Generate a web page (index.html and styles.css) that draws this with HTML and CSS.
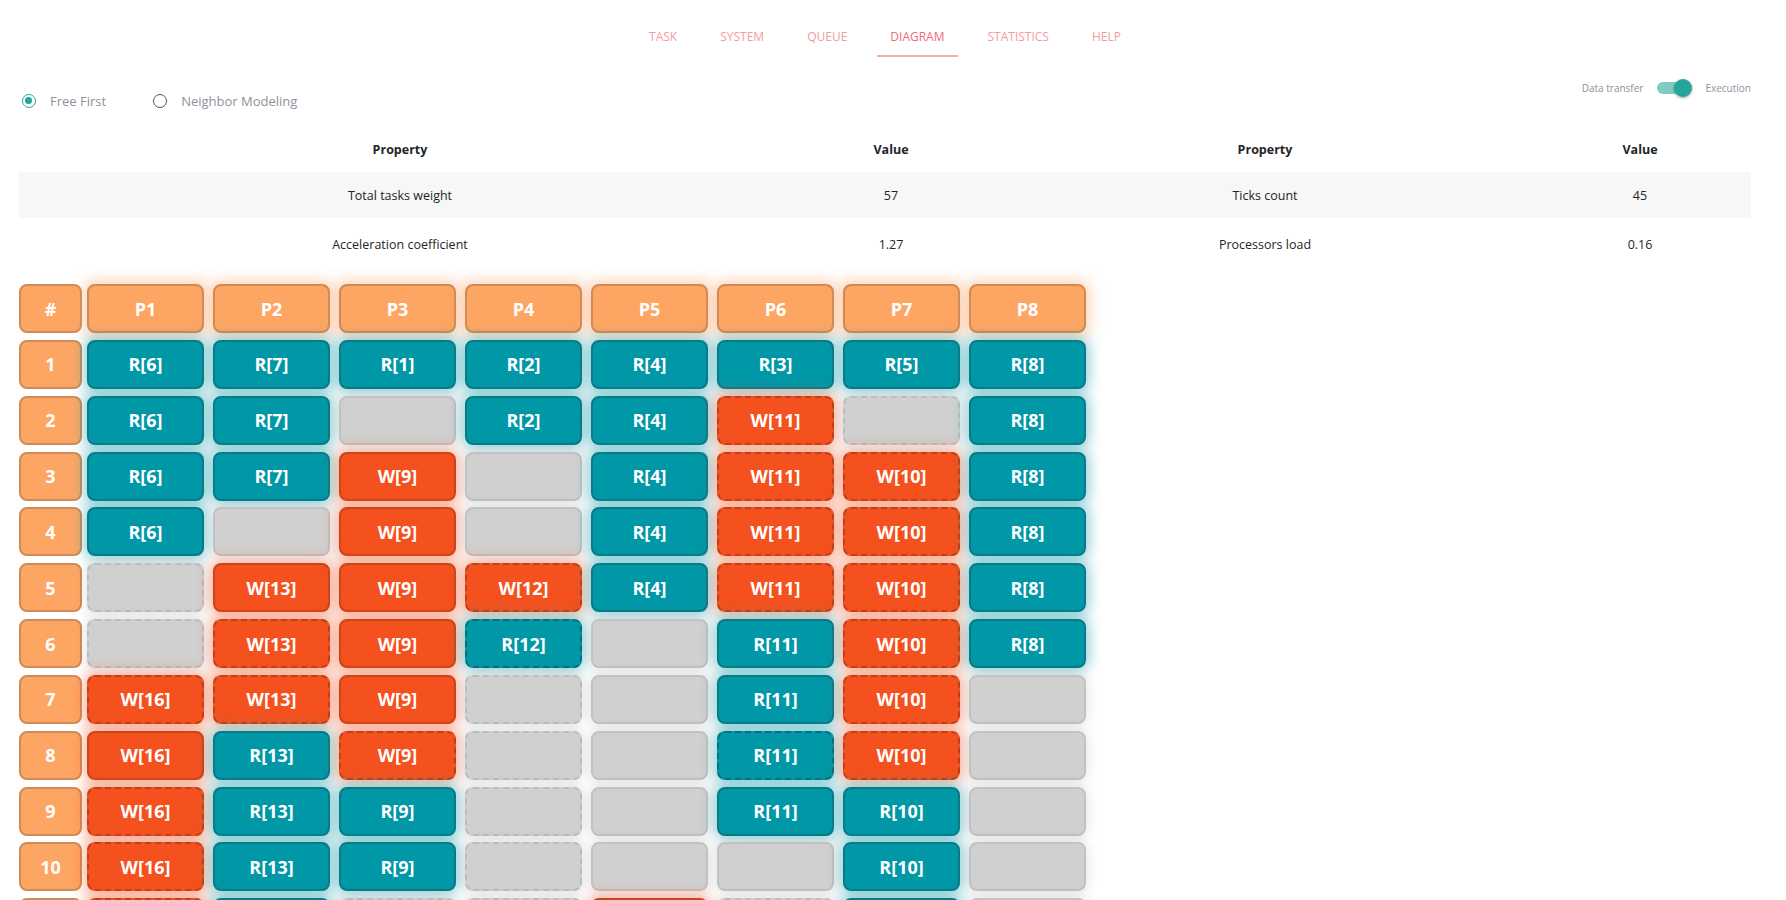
FILE: index.html
```html
<!DOCTYPE html>
<html lang="en">
<head>
<meta charset="utf-8">
<title>Diagram</title>
<link rel="stylesheet" href="styles.css">
</head>
<body>
<div class="app">
  <nav class="tabs">
    <a class="tab">TASK</a>
    <a class="tab">SYSTEM</a>
    <a class="tab">QUEUE</a>
    <a class="tab active">DIAGRAM</a>
    <a class="tab">STATISTICS</a>
    <a class="tab">HELP</a>
  </nav>

  <div class="controls">
    <div class="radios">
      <label class="radio checked"><span class="ring"></span><span class="rlabel">Free First</span></label>
      <label class="radio"><span class="ring"></span><span class="rlabel">Neighbor Modeling</span></label>
    </div>
    <div class="toggle">
      <span class="tlabel">Data transfer</span>
      <span class="switch"><span class="track"></span><span class="thumb"></span></span>
      <span class="tlabel">Execution</span>
    </div>
  </div>

  <table class="props">
    <colgroup><col class="c1"><col class="c2"><col class="c3"><col class="c4"></colgroup>
    <thead>
      <tr><th>Property</th><th>Value</th><th>Property</th><th>Value</th></tr>
    </thead>
    <tbody>
      <tr class="striped"><td>Total tasks weight</td><td>57</td><td>Ticks count</td><td>45</td></tr>
      <tr class="last"><td>Acceleration coefficient</td><td>1.27</td><td>Processors load</td><td>0.16</td></tr>
    </tbody>
  </table>

  <div class="diagram">
    <div class="cell idx">#</div>
    <div class="cell head">P1</div><div class="cell head">P2</div><div class="cell head">P3</div><div class="cell head">P4</div><div class="cell head">P5</div><div class="cell head">P6</div><div class="cell head">P7</div><div class="cell head">P8</div>

    <div class="cell idx">1</div>
    <div class="cell r">R[6]</div><div class="cell r">R[7]</div><div class="cell r">R[1]</div><div class="cell r">R[2]</div><div class="cell r">R[4]</div><div class="cell r">R[3]</div><div class="cell r">R[5]</div><div class="cell r">R[8]</div>

    <div class="cell idx">2</div>
    <div class="cell r">R[6]</div><div class="cell r">R[7]</div><div class="cell e"></div><div class="cell r">R[2]</div><div class="cell r">R[4]</div><div class="cell w d">W[11]</div><div class="cell e d"></div><div class="cell r">R[8]</div>

    <div class="cell idx">3</div>
    <div class="cell r">R[6]</div><div class="cell r">R[7]</div><div class="cell w">W[9]</div><div class="cell e"></div><div class="cell r">R[4]</div><div class="cell w d">W[11]</div><div class="cell w d">W[10]</div><div class="cell r">R[8]</div>

    <div class="cell idx">4</div>
    <div class="cell r">R[6]</div><div class="cell e"></div><div class="cell w">W[9]</div><div class="cell e"></div><div class="cell r">R[4]</div><div class="cell w d">W[11]</div><div class="cell w d">W[10]</div><div class="cell r">R[8]</div>

    <div class="cell idx">5</div>
    <div class="cell e d"></div><div class="cell w">W[13]</div><div class="cell w">W[9]</div><div class="cell w d">W[12]</div><div class="cell r">R[4]</div><div class="cell w d">W[11]</div><div class="cell w d">W[10]</div><div class="cell r">R[8]</div>

    <div class="cell idx">6</div>
    <div class="cell e d"></div><div class="cell w d">W[13]</div><div class="cell w">W[9]</div><div class="cell r d">R[12]</div><div class="cell e"></div><div class="cell r">R[11]</div><div class="cell w d">W[10]</div><div class="cell r">R[8]</div>

    <div class="cell idx">7</div>
    <div class="cell w d">W[16]</div><div class="cell w d">W[13]</div><div class="cell w">W[9]</div><div class="cell e d"></div><div class="cell e"></div><div class="cell r">R[11]</div><div class="cell w d">W[10]</div><div class="cell e"></div>

    <div class="cell idx">8</div>
    <div class="cell w">W[16]</div><div class="cell r">R[13]</div><div class="cell w d">W[9]</div><div class="cell e d"></div><div class="cell e"></div><div class="cell r d">R[11]</div><div class="cell w d">W[10]</div><div class="cell e"></div>

    <div class="cell idx">9</div>
    <div class="cell w d">W[16]</div><div class="cell r">R[13]</div><div class="cell r">R[9]</div><div class="cell e d"></div><div class="cell e"></div><div class="cell r">R[11]</div><div class="cell r">R[10]</div><div class="cell e"></div>

    <div class="cell idx">10</div>
    <div class="cell w d">W[16]</div><div class="cell r">R[13]</div><div class="cell r">R[9]</div><div class="cell e d"></div><div class="cell e"></div><div class="cell e"></div><div class="cell r">R[10]</div><div class="cell e"></div>

    <div class="cell idx"></div>
    <div class="cell w d"></div><div class="cell r"></div><div class="cell e d"></div><div class="cell e d"></div><div class="cell w"></div><div class="cell e d"></div><div class="cell r"></div><div class="cell e"></div>
  </div>
</div>
</body>
</html>
```

FILE: styles.css
```css
html { overflow: hidden; }
body {
  margin: 0;
  font-family: "Open Sans", "Noto Sans", sans-serif;
  color: #212529;
  background: #fff;
}
.app {
  width: 1771px;
  box-sizing: border-box;
  padding: 0 20px 0 19px;
}

/* tabs */
.tabs {
  display: flex;
  justify-content: center;
  gap: 17px;
  height: 57px;
}
.tab {
  display: block;
  box-sizing: border-box;
  height: 57px;
  padding: 28px 13px 0;
  font-size: 12px;
  line-height: 18px;
  color: #f49aa3;
  border-bottom: 2px solid transparent;
}
.tab.active {
  color: #ee6c78;
  border-bottom-color: #f5abab;
}

/* controls */
.controls {
  display: flex;
  justify-content: space-between;
  align-items: flex-start;
  height: 69px;
}
.radios {
  display: flex;
  gap: 47px;
  padding: 35px 0 0 3px;
}
.radio {
  display: flex;
  align-items: center;
  gap: 14px;
  font-size: 13px;
  line-height: 18px;
  color: #8b929c;
}
.ring {
  width: 14px;
  height: 14px;
  box-sizing: border-box;
  border: 1.5px solid #555;
  border-radius: 50%;
  position: relative;
}
.radio.checked .ring {
  border-color: #26a69a;
}
.radio.checked .ring::after {
  content: "";
  position: absolute;
  left: 2px; top: 2px;
  width: 7px; height: 7px;
  border-radius: 50%;
  background: #26a69a;
}
.toggle {
  display: flex;
  align-items: center;
  padding-top: 21px;
  font-size: 10px;
  color: #8b929c;
}
.switch {
  position: relative;
  width: 36px;
  height: 20px;
  margin: 0 12px 0 14px;
}
.track {
  position: absolute;
  left: 0; top: 4px;
  width: 32px; height: 12px;
  border-radius: 6px;
  background: #80cbc4;
}
.thumb {
  position: absolute;
  left: 17px; top: 1px;
  width: 18px; height: 18px;
  border-radius: 50%;
  background: #26a69a;
  box-shadow: 0 1px 3px rgba(0,0,0,0.35);
}

/* properties table */
.props {
  width: 1732px;
  border-collapse: collapse;
  table-layout: fixed;
  font-size: 12.5px;
}
.props .c1 { width: 762px; }
.props .c2 { width: 220px; }
.props .c3 { width: 528px; }
.props .c4 { width: 222px; }
.props th, .props td {
  height: 46px;
  padding: 0 12px;
  text-align: center;
  vertical-align: middle;
}
.props tr.last td { height: 52px; }
.props th { font-weight: 700; }
.props tr.striped td { background: #f7f7f7; }

/* diagram */
.diagram {
  margin-top: 14px;
  display: grid;
  grid-template-columns: 59px repeat(8, 117px);
  grid-auto-rows: 49px;
  column-gap: 9px;
  row-gap: 6.85px;
}
.cell {
  box-sizing: border-box;
  height: 49px;
  border: 2px solid transparent;
  border-radius: 8px;
  display: flex;
  align-items: center;
  justify-content: center;
  font-family: "Open Sans", sans-serif;
  font-weight: 700;
  font-size: 18px;
  color: #fff;
}
.idx {
  width: 63px;
  background: #fda664;
  border-color: #cf8b57;
}
.head {
  background: #fda664;
  border-color: #cf8b57;
  box-shadow: 0 0 14px 3px rgba(253,160,95,0.5);
}
.r {
  background: #0097a7;
  border-color: #0a7b86;
  box-shadow: 0 0 14px 3px rgba(0,151,167,0.45);
}
.w {
  background: #f4511e;
  border-color: #c9461b;
  box-shadow: 0 0 14px 3px rgba(244,81,30,0.45);
}
.e {
  background: #d0d0d0;
  border-color: #c2c2c2;
  box-shadow: 0 0 12px 2px rgba(0,0,0,0.1);
}
.d { border-style: dashed; }
.r.d { border-color: #086f7a; }
.w.d { border-color: #b5431e; }
.e.d { border-color: #bdbdbd; }
```
